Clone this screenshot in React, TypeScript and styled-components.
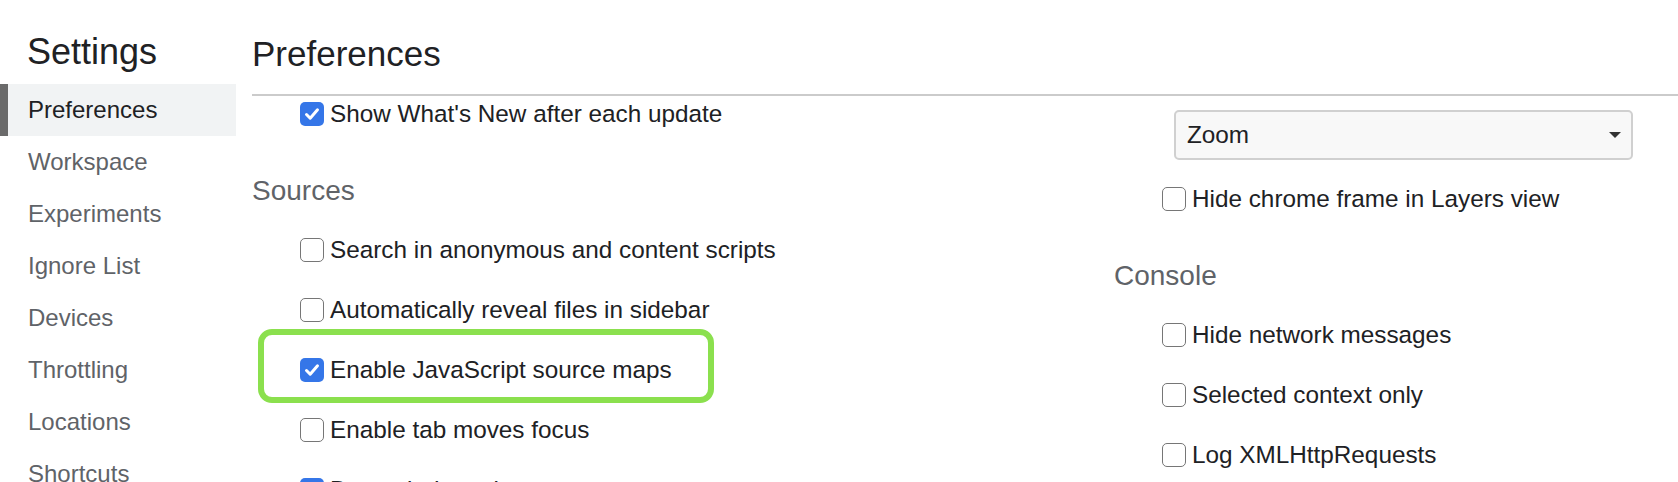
import React from "react";
import styled, { createGlobalStyle, css } from "styled-components";

const GlobalStyle = createGlobalStyle`
  html, body {
    margin: 0;
    padding: 0;
    background: #fff;
  }
  body {
    font-family: "Liberation Sans", Arial, Helvetica, sans-serif;
    color: #202124;
  }
`;

const Page = styled.div`
  display: flex;
  width: 1678px;
  height: 482px;
  overflow: hidden;
  background: #fff;
`;

const Sidebar = styled.nav`
  width: 236px;
  flex-shrink: 0;
  display: flex;
  flex-direction: column;
`;

const SidebarTitle = styled.h1`
  margin: 0;
  padding: 32px 0 12px 27px;
  font-size: 36px;
  line-height: 40px;
  font-weight: 400;
  color: #202124;
`;

const NavItem = styled.div<{ $active?: boolean }>`
  flex-shrink: 0;
  height: 52px;
  line-height: 52px;
  padding-left: 28px;
  font-size: 24px;
  color: #5f6368;
  ${({ $active }) =>
    $active &&
    css`
      background: #f1f3f4;
      border-left: 8px solid #6a6a6a;
      padding-left: 20px;
      color: #202124;
    `}
`;

const Main = styled.main`
  flex: 1;
  min-width: 0;
  padding-left: 16px;
  display: flex;
  flex-direction: column;
`;

const Header = styled.h2`
  margin: 0;
  padding: 34px 0 20px;
  font-size: 35px;
  line-height: 40px;
  font-weight: 400;
  color: #202124;
  border-bottom: 2px solid #cbcbcb;
`;

const ScrollArea = styled.div`
  flex: 1;
  overflow: hidden;
`;

// content is scrolled a little, so the first row starts above the divider
const Columns = styled.div`
  display: grid;
  grid-template-columns: 862px 1fr;
  margin-top: -12px;
`;

const Column = styled.div`
  display: flex;
  flex-direction: column;
`;

const SectionTitle = styled.h3`
  margin: 0;
  padding: 30px 0 12px;
  font-size: 28px;
  line-height: 34px;
  font-weight: 400;
  color: #5f6368;
`;

const Row = styled.label<{ $highlight?: boolean }>`
  position: relative;
  display: flex;
  align-items: center;
  gap: 6px;
  width: fit-content;
  height: 60px;
  margin-left: 48px;
  font-size: 24.3px;
  color: #202124;
  ${({ $highlight }) =>
    $highlight &&
    css`
      &::after {
        content: "";
        position: absolute;
        top: -11px;
        bottom: -3px;
        left: -42px;
        right: -42px;
        border: 6px solid #8be04e;
        border-radius: 14px;
      }
    `}
`;

const Box = styled.span<{ $checked?: boolean }>`
  width: 24px;
  height: 24px;
  box-sizing: border-box;
  border-radius: 5px;
  flex-shrink: 0;
  display: flex;
  align-items: center;
  justify-content: center;
  border: 1.5px solid #767676;
  background: #fff;
  ${({ $checked }) =>
    $checked &&
    css`
      border: none;
      background: #3576e8;
    `}
`;

const SelectWrap = styled.div`
  padding: 26px 0 9px 60px;
`;

const Select = styled.div`
  width: 459px;
  height: 50px;
  box-sizing: border-box;
  display: flex;
  align-items: center;
  justify-content: space-between;
  padding: 0 10px 0 11px;
  border: 2px solid #d0d0d0;
  border-radius: 5px;
  background: #f8f8f8;
  font-size: 24.3px;
  color: #202124;
`;

const Caret = styled.span`
  width: 0;
  height: 0;
  border-left: 6px solid transparent;
  border-right: 6px solid transparent;
  border-top: 6px solid #333;
`;

function Checkbox({ label, checked, highlight }: { label: string; checked?: boolean; highlight?: boolean }) {
  return (
    <Row $highlight={highlight}>
      <Box $checked={checked}>
        {checked && (
          <svg width="24" height="24" viewBox="0 0 24 24">
            <path d="M6.5 12.5 L10.2 16.2 L17.5 7.8" fill="none" stroke="#fff" strokeWidth="3" strokeLinecap="round" strokeLinejoin="round" />
          </svg>
        )}
      </Box>
      {label}
    </Row>
  );
}

const navItems = ["Preferences", "Workspace", "Experiments", "Ignore List", "Devices", "Throttling", "Locations", "Shortcuts"];

export default function App() {
  return (
    <>
      <GlobalStyle />
      <Page>
        <Sidebar>
          <SidebarTitle>Settings</SidebarTitle>
          {navItems.map((item, i) => (
            <NavItem key={item} $active={i === 0}>
              {item}
            </NavItem>
          ))}
        </Sidebar>
        <Main>
          <Header>Preferences</Header>
          <ScrollArea>
            <Columns>
              <Column>
                <Checkbox label="Show What's New after each update" checked />
                <SectionTitle>Sources</SectionTitle>
                <Checkbox label="Search in anonymous and content scripts" />
                <Checkbox label="Automatically reveal files in sidebar" />
                <Checkbox label="Enable JavaScript source maps" checked highlight />
                <Checkbox label="Enable tab moves focus" />
                <Checkbox label="Detect indentation" checked />
                <Checkbox label="Autocompletion" checked />
              </Column>
              <Column>
                <SelectWrap>
                  <Select>
                    Zoom
                    <Caret />
                  </Select>
                </SelectWrap>
                <Checkbox label="Hide chrome frame in Layers view" />
                <SectionTitle>Console</SectionTitle>
                <Checkbox label="Hide network messages" />
                <Checkbox label="Selected context only" />
                <Checkbox label="Log XMLHttpRequests" />
                <Checkbox label="Show timestamps" />
              </Column>
            </Columns>
          </ScrollArea>
        </Main>
      </Page>
    </>
  );
}
